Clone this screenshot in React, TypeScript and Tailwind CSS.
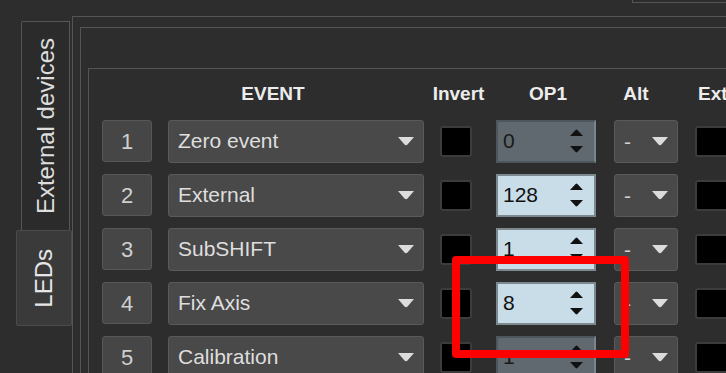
const rows = [
  { n: 1, event: "Zero event", op1: "0", enabled: false },
  { n: 2, event: "External", op1: "128", enabled: true },
  { n: 3, event: "SubSHIFT", op1: "1", enabled: true },
  { n: 4, event: "Fix Axis", op1: "8", enabled: true },
  { n: 5, event: "Calibration", op1: "1", enabled: false },
];

function DownArrow() {
  return (
    <svg width="16" height="9" viewBox="0 0 16 9">
      <path d="M0 0 H16 L9.5 7.6 Q8 9 6.5 7.6 Z" fill="#dcdcdc" />
    </svg>
  );
}

function SpinArrows() {
  return (
    <svg width="13" height="24" viewBox="0 0 13 24" className="shrink-0">
      <path d="M0 7 L5.6 1 Q6.5 0.2 7.4 1 L13 7 Z" fill="#111" />
      <path d="M0 17 H13 L7.4 23 Q6.5 23.8 5.6 23 Z" fill="#111" />
    </svg>
  );
}

function Row({ n, event, op1, enabled }: (typeof rows)[number]) {
  return (
    <div className="flex h-[42px] items-center">
      <div className="flex h-[42px] w-[50px] shrink-0 items-center justify-center rounded-[3px] border border-[#575757] bg-[#464646] text-[22px] text-[#cfcfcf]">
        {n}
      </div>
      <div className="ml-[16px] flex h-[43px] w-[256px] shrink-0 items-center justify-between rounded-[3px] border border-[#5a5a5a] bg-[#494949] pl-[9px] pr-[9px] text-[21px] text-[#dedede]">
        <span className="whitespace-nowrap">{event}</span>
        <DownArrow />
      </div>
      <div className="ml-[16px] flex h-[31px] w-[32px] shrink-0 items-center justify-center rounded-[3px] border-2 border-[#3c3c3c] bg-black" />
      <div
        className={
          enabled
            ? "ml-[24px] flex h-[43px] w-[100px] shrink-0 items-center justify-between border-2 border-[#7c8a90] bg-[#c8dde7] pl-[5px] pr-[11px] text-[21px] text-[#111]"
            : "ml-[24px] flex h-[43px] w-[100px] shrink-0 items-center justify-between border-2 border-[#4e565b] border-r-[#78858b] bg-[#5f696f] pl-[5px] pr-[11px] text-[21px] text-[#1a1a1a]"
        }
      >
        <span>{op1}</span>
        <SpinArrows />
      </div>
      <div className="ml-[18px] flex h-[43px] w-[64px] shrink-0 items-center justify-between rounded-[3px] border border-[#5a5a5a] bg-[#494949] pl-[9px] pr-[9px] text-[21px] text-[#d0d0d0]">
        <span className="mt-[2px]">-</span>
        <DownArrow />
      </div>
      <div className="ml-[17px] h-[31px] w-[34px] shrink-0 rounded-[3px] border-2 border-[#3c3c3c] bg-black" />
    </div>
  );
}

export default function App() {
  return (
    <div
      className="relative h-[373px] w-[726px] overflow-hidden bg-[#2d2d2d]"
      style={{ fontFamily: '"Liberation Sans", Arial, sans-serif' }}
    >
      {/* top-right box corner */}
      <div className="ml-[632px] h-[3px] border-b border-l border-[#555]" />

      <div className="mt-[13px] flex">
        {/* vertical tabs */}
        <div className="flex w-[72px] shrink-0 flex-col pt-[5px]">
          <div className="ml-[21px] flex h-[209px] w-[49px] items-center justify-center rounded-tl-[2px] border border-b-0 border-[#565656] bg-[#2b2b2b]">
            <span className="rotate-180 whitespace-nowrap text-[24px] text-[#dddddd] [writing-mode:vertical-rl]">
              External devices
            </span>
          </div>
          <div className="ml-[16px] flex h-[96px] w-[56px] items-center justify-center rounded-[2px] border border-[#4b4b4b] bg-[#3a3a3a]">
            <span className="rotate-180 whitespace-nowrap text-[24px] text-[#e6e6e6] [writing-mode:vertical-rl]">
              LEDs
            </span>
          </div>
        </div>

        {/* nested frames */}
        <div className="h-[400px] flex-1 border-l border-t border-[#545454] pl-[7px] pt-[10px]">
          <div className="h-[400px] border-l border-t border-[#545454] pl-[7px] pt-[40px]">
            <div className="h-[400px] border-l border-t border-[#545454] pl-[13px] pt-[13px]">
              <div className="flex h-[24px] items-center text-[19px] font-bold text-[#ececec]">
                <div className="flex w-[342px] shrink-0 justify-center whitespace-nowrap">EVENT</div>
                <div className="flex w-[29px] shrink-0 justify-center whitespace-nowrap">Invert</div>
                <div className="flex w-[150px] shrink-0 justify-center whitespace-nowrap">OP1</div>
                <div className="flex w-[26px] shrink-0 justify-center whitespace-nowrap">Alt</div>
                <div className="shrink-0 whitespace-nowrap pl-[49px]">Ext</div>
              </div>
              <div className="mt-[14px] flex flex-col gap-[12px]">
                {rows.map((r) => (
                  <Row key={r.n} {...r} />
                ))}
              </div>
            </div>
          </div>
        </div>
      </div>

      {/* annotation overlay */}
      <div className="absolute left-[452px] top-[256px] h-[102px] w-[177px] rounded-[4px] border-[8px] border-[#ff0000]" />
    </div>
  );
}
